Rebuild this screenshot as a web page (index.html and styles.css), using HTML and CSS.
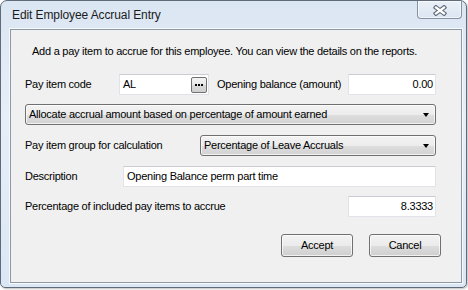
FILE: index.html
```html
<!DOCTYPE html>
<html>
<head>
<meta charset="utf-8">
<link rel="stylesheet" href="styles.css">
</head>
<body>
<div class="window">
  <div class="titlebar">
    <span class="title">Edit Employee Accrual Entry</span>
    <div class="close">
      <svg width="14" height="11" viewBox="0 0 14 11">
        <path d="M3 2.5 L11 8.5 M11 2.5 L3 8.5" stroke="#5f6a78" stroke-width="4.4" stroke-linecap="square"/>
        <path d="M3 2.5 L11 8.5 M11 2.5 L3 8.5" stroke="#ffffff" stroke-width="2.2" stroke-linecap="square"/>
      </svg>
    </div>
  </div>
  <div class="client">
    <p class="intro">Add a pay item to accrue for this employee. You can view the details on the reports.</p>
    <div class="row r1">
      <span class="label">Pay item code</span>
      <div class="input code"><span>AL</span><span class="dots"><i></i><i></i><i></i></span></div>
      <span class="label ob">Opening balance (amount)</span>
      <div class="input num short">0.00</div>
    </div>
    <div class="combo wide r2"><span>Allocate accrual amount based on percentage of amount earned</span><i class="arrow"></i></div>
    <div class="row r3">
      <span class="label">Pay item group for calculation</span>
      <div class="combo group"><span>Percentage of Leave Accruals</span><i class="arrow"></i></div>
    </div>
    <div class="row r4">
      <span class="label">Description</span>
      <div class="input desc">Opening Balance perm part time</div>
    </div>
    <div class="row r5">
      <span class="label">Percentage of included pay items to accrue</span>
      <div class="input num short">8.3333</div>
    </div>
    <div class="buttons">
      <div class="btn">Accept</div>
      <div class="btn">Cancel</div>
    </div>
  </div>
</div>
</body>
</html>
```
FILE: styles.css
```css
* { box-sizing: border-box; }
html, body { margin: 0; padding: 0; }
body {
  background: #ffffff;
  width: 468px;
  height: 290px;
  overflow: hidden;
  font-family: "Liberation Sans", Arial, sans-serif;
  font-size: 11px;
  letter-spacing: -0.25px;
  color: #000;
}
.window {
  width: 467px;
  height: 288px;
  border: 1px solid #5f6b78;
  border-radius: 7px 7px 5px 5px;
  background: linear-gradient(#dbe6f3, #e6eef8 40%, #dbe7f5);
  padding: 0 4px 4px 9px;
  display: flex;
  flex-direction: column;
  box-shadow: 1px 1px 2px rgba(0,0,0,0.25);
}
.titlebar {
  height: 28px;
  display: flex;
  align-items: flex-start;
}
.title {
  margin-top: 7px;
  margin-left: 2px;
  font-size: 12px;
  line-height: 15px;
  color: #1b1b1b;
  letter-spacing: -0.1px;
}
.close {
  margin-left: auto;
  width: 45px;
  height: 18px;
  border: 1px solid #8592a3;
  border-top: none;
  border-radius: 0 0 4px 4px;
  background: linear-gradient(#eaf0f7, #dbe5f1);
  box-shadow: inset 0 0 0 1px rgba(255,255,255,0.6);
  display: flex;
  align-items: center;
  justify-content: center;
}
.close svg { display: block; margin-top: 1px; }
.client {
  flex: 1;
  border: 1px solid #8e99a6;
  box-shadow: 0 0 0 1px #f6f9fd;
  background: #f0f0f0;
  padding: 15px 25px 0 14px;
  display: flex;
  flex-direction: column;
}
.intro {
  margin: 0 0 0 7px;
  line-height: 13px;
  height: 13px;
  white-space: nowrap;
}
.row {
  display: flex;
  align-items: center;
  height: 21px;
}
.label { white-space: nowrap; line-height: 13px; }
.r1 { margin-top: 16px; }
.r2 { margin-top: 9px; }
.r3 { margin-top: 10px; }
.r4 { margin-top: 10px; }
.r5 { margin-top: 9px; }
.input {
  height: 21px;
  background: #fff;
  border: 1px solid #e2e3ea;
  border-top-color: #c9ccd2;
  display: flex;
  align-items: center;
  padding: 0 3px;
  white-space: nowrap;
  line-height: 13px;
}
.code {
  width: 90px;
  margin-left: 94px;
  justify-content: space-between;
  padding-right: 1px;
}
.r1 .label:first-child { width: 0; }
.dots {
  width: 16px;
  height: 16px;
  border: 1px solid #707070;
  border-radius: 2px;
  background: linear-gradient(#f4f4f4, #e6e6e6 50%, #d9d9d9 51%, #d0d0d0);
  display: flex;
  align-items: center;
  justify-content: center;
  gap: 1px;
  padding-top: 1px;
}
.dots i {
  width: 2px;
  height: 2px;
  background: #000;
  display: block;
}
.ob { margin-left: 8px; }
.num { justify-content: flex-end; padding-right: 2px; }
.short { width: 88px; margin-left: auto; }
.desc { width: 313px; margin-left: auto; }
.combo {
  height: 21px;
  border: 1px solid #707070;
  border-radius: 3px;
  background: linear-gradient(#f3f3f3, #ececec 50%, #dedede 51%, #d2d2d2);
  box-shadow: inset 0 0 0 1px rgba(255,255,255,0.7);
  display: flex;
  align-items: center;
  padding: 0 6px 0 3px;
  white-space: nowrap;
  line-height: 13px;
}
.combo span { flex: 1; }
.wide { width: 411px; }
.group { width: 236px; margin-left: auto; }
.arrow {
  display: block;
  width: 0;
  height: 0;
  border-left: 3.5px solid transparent;
  border-right: 3.5px solid transparent;
  border-top: 4px solid #000;
  margin-top: 1px;
}
.buttons {
  margin-top: 17px;
  margin-right: -5px;
  display: flex;
  justify-content: flex-end;
  gap: 16px;
}
.btn {
  width: 72px;
  height: 23px;
  border: 1px solid #707070;
  border-radius: 3px;
  background: linear-gradient(#f2f2f2, #ebebeb 50%, #dddddd 51%, #cfcfcf);
  box-shadow: inset 0 0 0 1px rgba(255,255,255,0.7);
  display: flex;
  align-items: center;
  justify-content: center;
  line-height: 13px;
}
```
